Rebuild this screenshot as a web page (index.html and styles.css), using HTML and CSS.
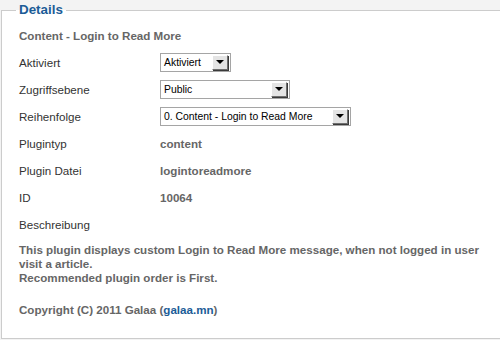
FILE: index.html
```html
<!DOCTYPE html>
<html lang="de">
<head>
    <meta charset="UTF-8">
    <title>Plugin Details</title>
    <link rel="stylesheet" href="styles.css">
</head>
<body>
    <fieldset class="details">
        <legend>Details</legend>
        <div class="details-body">
            <h3 class="plugin-title">Content - Login to Read More</h3>

            <div class="rows">
                <div class="row">
                    <span class="label">Aktiviert</span>
                    <span class="select select-sm"><span class="select-text">Aktiviert</span><span class="select-btn"></span></span>
                </div>
                <div class="row">
                    <span class="label">Zugriffsebene</span>
                    <span class="select select-md"><span class="select-text">Public</span><span class="select-btn"></span></span>
                </div>
                <div class="row">
                    <span class="label">Reihenfolge</span>
                    <span class="select select-lg"><span class="select-text">0. Content - Login to Read More</span><span class="select-btn"></span></span>
                </div>
                <div class="row">
                    <span class="label">Plugintyp</span>
                    <span class="value">content</span>
                </div>
                <div class="row">
                    <span class="label">Plugin Datei</span>
                    <span class="value">logintoreadmore</span>
                </div>
                <div class="row">
                    <span class="label">ID</span>
                    <span class="value">10064</span>
                </div>
                <div class="row">
                    <span class="label">Beschreibung</span>
                </div>
            </div>

            <p class="description">This plugin displays custom Login to Read More message, when not logged in user visit a article.<br>Recommended plugin order is First.</p>
            <p class="description copyright">Copyright (C) 2011 Galaa (<a href="#">galaa.mn</a>)</p>
        </div>
    </fieldset>
</body>
</html>
```

FILE: styles.css
```css
* {
    box-sizing: border-box;
}

html, body {
    margin: 0;
    padding: 0;
    overflow: hidden;
}

body {
    background: #f3f3f3;
    font-family: "Liberation Sans", Arial, sans-serif;
    font-size: 11.6px;
    color: #333;
    width: 500px;
    height: 340px;
}

/* Details box */
.details {
    margin: 0 0 0 1px;
    padding: 0 0 0 14px;
    width: 500px;
    height: 339px;
    border: 1px solid #cccccc;
    border-right: none;
    background: #fff;
}

.details legend {
    padding: 0 3px;
    font-size: 13.4px;
    line-height: 20px;
    font-weight: bold;
    color: #1c5c97;
}

.details-body {
    padding-left: 3px;
    width: 470px;
}

.plugin-title {
    margin: 9px 0 6px;
    font-size: 11.6px;
    line-height: 14px;
    font-weight: bold;
    color: #666;
}

/* Rows */
.row {
    display: flex;
    align-items: center;
    height: 27px;
}

.label {
    width: 141px;
    flex-shrink: 0;
}

.value {
    font-weight: bold;
    color: #666;
}

/* Old-style select boxes */
.select {
    display: flex;
    align-items: center;
    justify-content: space-between;
    height: 19px;
    padding: 1px;
    border: 1px solid #a5a5a5;
    background: #fff;
    font-size: 10.4px;
    color: #000;
}

.select-sm { width: 71px; }
.select-md { width: 130px; }
.select-lg { width: 191px; }

.select-text {
    padding-left: 2px;
    white-space: nowrap;
}

.select-btn {
    position: relative;
    width: 16px;
    height: 15px;
    background: #e4e4e4;
    border: 1px solid;
    border-color: #fff #6f6f6f #6f6f6f #fff;
    box-shadow: 1px 1px 0 #3a3a3a;
    margin-right: 1px;
}

.select-btn::after {
    content: "";
    position: absolute;
    left: 3px;
    top: 4px;
    border-left: 4px solid transparent;
    border-right: 4px solid transparent;
    border-top: 4px solid #000;
}

/* Description */
.description {
    margin: 5px 0 0;
    line-height: 14px;
    font-weight: bold;
    color: #666;
}

.copyright {
    margin-top: 18px;
}

.copyright a {
    color: #1c5c97;
    text-decoration: none;
}
```
